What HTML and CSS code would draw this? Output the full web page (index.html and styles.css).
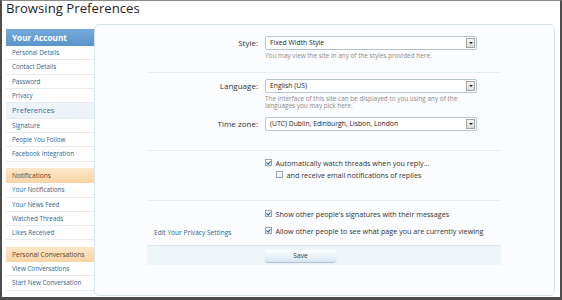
FILE: index.html
```html
<!DOCTYPE html>
<html lang="en">
<head>
  <meta charset="UTF-8" />
  <title>Browsing Preferences</title>
  <link rel="stylesheet" href="styles.css">
</head>
<body>
  <div class="frame">
    <h1 class="page-title">Browsing Preferences</h1>
    <div class="layout">
      <div class="sidebar">
        <div class="side-group">
          <div class="side-head account">Your Account</div>
          <a class="side-link">Personal Details</a>
          <a class="side-link">Contact Details</a>
          <a class="side-link">Password</a>
          <a class="side-link">Privacy</a>
          <div class="side-head sub">Preferences</div>
          <a class="side-link">Signature</a>
          <a class="side-link">People You Follow</a>
          <a class="side-link">Facebook Integration</a>
        </div>
        <div class="side-group">
          <div class="side-head orange">Notifications</div>
          <a class="side-link">Your Notifications</a>
          <a class="side-link">Your News Feed</a>
          <a class="side-link">Watched Threads</a>
          <a class="side-link">Likes Received</a>
        </div>
        <div class="side-group">
          <div class="side-head orange">Personal Conversations</div>
          <a class="side-link">View Conversations</a>
          <a class="side-link">Start New Conversation</a>
        </div>
      </div>

      <div class="panel">
        <form class="prefs">
          <div class="block first">
            <div class="row">
              <label class="ctrl-label">Style:</label>
              <div class="ctrl">
                <div class="select">Fixed Width Style<span class="arrow"></span></div>
                <p class="hint">You may view the site in any of the styles provided here.</p>
              </div>
            </div>
          </div>

          <div class="block second">
            <div class="row">
              <label class="ctrl-label">Language:</label>
              <div class="ctrl">
                <div class="select">English (US)<span class="arrow"></span></div>
                <p class="hint">The interface of this site can be displayed to you using any of the<br>languages you may pick here.</p>
              </div>
            </div>
            <div class="row tz">
              <label class="ctrl-label">Time zone:</label>
              <div class="ctrl">
                <div class="select">(UTC) Dublin, Edinburgh, Lisbon, London<span class="arrow"></span></div>
              </div>
            </div>
          </div>

          <div class="block third">
            <div class="row">
              <span class="ctrl-label"></span>
              <div class="ctrl">
                <div class="check-line"><span class="box on"></span>Automatically watch threads when you reply...</div>
                <div class="check-line indent"><span class="box"></span>and receive email notifications of replies</div>
              </div>
            </div>
          </div>

          <div class="block fourth">
            <div class="row">
              <span class="ctrl-label"></span>
              <div class="ctrl">
                <div class="check-line"><span class="box on"></span>Show other people's signatures with their messages</div>
              </div>
            </div>
            <div class="row second-line">
              <span class="ctrl-label privacy"><a>Edit Your Privacy Settings</a></span>
              <div class="ctrl">
                <div class="check-line"><span class="box on"></span>Allow other people to see what page you are currently viewing</div>
              </div>
            </div>
          </div>

          <div class="submit-bar">
            <span class="ctrl-label"></span>
            <div class="ctrl">
              <button type="button" class="save">Save</button>
            </div>
          </div>
        </form>
      </div>
    </div>
  </div>
</body>
</html>
```

FILE: styles.css
```css
* {
  margin: 0;
  padding: 0;
  box-sizing: border-box;
}

body {
  font-family: 'Open Sans', 'Liberation Sans', sans-serif;
  background: #ffffff;
  color: #333;
}

.frame {
  width: 562px;
  height: 300px;
  border-top: 1px solid #8a8a8a;
  border-left: 2px solid #4d4d4d;
  border-right: 2px solid #4d4d4d;
  border-bottom: 3px solid #4d4d4d;
  overflow: hidden;
}

.page-title {
  font-size: 13.2px;
  font-weight: normal;
  color: #1f1f1f;
  line-height: 15px;
  padding-left: 4px;
  height: 23px;
}

.layout {
  display: flex;
  padding-left: 4px;
}

/* Sidebar */
.sidebar {
  width: 88px;
  margin-top: 5px;
  flex-shrink: 0;
}

.side-group + .side-group {
  margin-top: 6.7px;
}

.side-head {
  padding-left: 6px;
}

.side-head.account {
  height: 17px;
  line-height: 17px;
  font-size: 8.2px;
  font-weight: bold;
  color: #ffffff;
  background: linear-gradient(to bottom, #74aadb, #5c95cc);
}

.side-head.sub {
  height: 15.5px;
  line-height: 15.5px;
  font-size: 7.6px;
  color: #3d6a98;
  background: #edf3f8;
  border-bottom: 1px solid #e3eaf0;
}

.side-head.orange {
  height: 15px;
  line-height: 15px;
  font-size: 6.6px;
  color: #5b4324;
  background: linear-gradient(to bottom, #fde7c9, #f8d4a4);
}

.side-link {
  display: block;
  height: 14.3px;
  line-height: 13.3px;
  padding-left: 6px;
  font-size: 6.3px;
  color: #335f88;
  border-bottom: 1px solid #e6ebef;
}

/* Panel */
.panel {
  flex: 1;
  margin-right: 5px;
  height: 272px;
  border: 1px solid #d6e4eb;
  border-radius: 5px;
  background: #fbfcfd;
}

.prefs {
  width: 354px;
  margin-left: 52px;
}

.block {
  border-bottom: 1px solid #e4edf2;
}

.block.first {
  padding: 11px 0 12px;
}

.block.second {
  padding: 6px 0 18.5px;
}

.block.third {
  padding: 6px 0 19px;
}

.block.fourth {
  border-bottom: none;
  padding: 7px 0 6px;
}

.row,
.submit-bar {
  display: grid;
  grid-template-columns: 111px 1fr;
  column-gap: 7px;
}

.row.tz {
  margin-top: 7.5px;
}

.row.second-line {
  margin-top: 5px;
}

.ctrl-label {
  text-align: right;
  font-size: 8px;
  color: #333;
  line-height: 14px;
}

.ctrl-label.privacy {
  text-align: left;
  padding-left: 7px;
  padding-top: 1px;
  line-height: 12px;
}

.ctrl-label.privacy a {
  color: #2f5f8c;
  font-size: 6.6px;
}

.select {
  position: relative;
  width: 212px;
  height: 14px;
  line-height: 12px;
  padding-left: 4px;
  border: 1px solid #b9c3ca;
  border-radius: 2px;
  background: #ffffff;
  font-size: 6.8px;
  color: #222;
}

.arrow {
  position: absolute;
  right: 1px;
  top: 1px;
  width: 9px;
  height: 10px;
  border: 1px solid #a4a4a4;
  background: linear-gradient(to bottom, #f4f4f4, #dcdcdc);
}

.arrow::after {
  content: "";
  position: absolute;
  left: 2px;
  top: 3px;
  border-left: 2px solid transparent;
  border-right: 2px solid transparent;
  border-top: 2px solid #222;
}

.hint {
  margin-top: 2px;
  font-size: 6.4px;
  line-height: 7.5px;
  color: #8a8a8a;
}

.check-line {
  display: flex;
  align-items: center;
  height: 12px;
  font-size: 7.2px;
  color: #333;
}

.check-line.indent {
  padding-left: 11px;
}

.box {
  width: 6.5px;
  height: 6.5px;
  margin-right: 4px;
  border: 1px solid #9aa4ac;
  background: linear-gradient(to bottom, #ffffff, #e9ecef);
  position: relative;
  flex-shrink: 0;
}

.box.on::after {
  content: "";
  position: absolute;
  left: 1.3px;
  top: 0;
  width: 1.6px;
  height: 3.2px;
  border-right: 1px solid #2f5d9a;
  border-bottom: 1px solid #2f5d9a;
  transform: rotate(40deg);
}

.submit-bar {
  height: 20px;
  border-top: 1px solid #dbe8ef;
  background: #eef6fa;
  padding-top: 4px;
}

.submit-bar .ctrl {
  display: flex;
}

.save {
  display: block;
  width: 71px;
  height: 12px;
  border: none;
  border-radius: 3px;
  font-family: inherit;
  font-size: 6.6px;
  color: #333;
  background: linear-gradient(to bottom, #ffffff, #d6e5f1);
  box-shadow: 0 1px 1px rgba(60, 90, 120, 0.35);
}
```
